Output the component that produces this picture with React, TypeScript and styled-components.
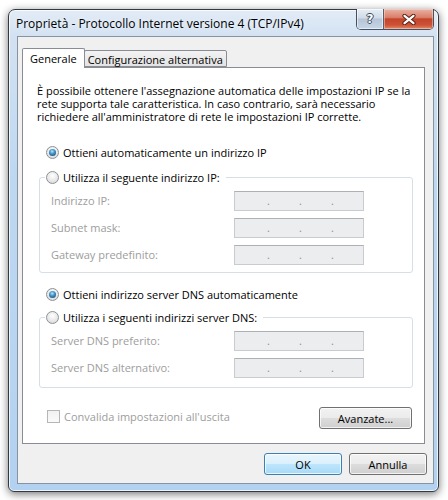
import styled, { createGlobalStyle } from "styled-components";

const GlobalStyle = createGlobalStyle`
  html, body {
    margin: 0;
    padding: 0;
    background: #ffffff;
  }
  body {
    font-family: "Segoe UI", "Open Sans", "Noto Sans", sans-serif;
    font-size: 11px;
    color: #000;
  }
  * {
    box-sizing: border-box;
  }
`;

// Desktop and window frame
const Desktop = styled.div`
  width: 448px;
  height: 500px;
  padding: 9px 0 0 8px;
  background: #ffffff;
`;

const Window = styled.div`
  width: 431px;
  height: 483px;
  display: flex;
  flex-direction: column;
  padding: 0 4px 7px 8px;
  border: 1px solid #343a42;
  border-radius: 7px 7px 6px 6px;
  background: linear-gradient(
    180deg,
    #e2ecf7 0px,
    #d3e2f2 26px,
    #bfd8f1 160px,
    #b3d1f0 100%
  );
  box-shadow: 0 2px 9px rgba(0, 0, 0, 0.55),
    inset 0 0 0 1px rgba(255, 255, 255, 0.75);
`;

const TitleBar = styled.div`
  height: 26px;
  display: flex;
  justify-content: space-between;
  align-items: flex-start;
`;

const Title = styled.div`
  margin-left: -1px;
  padding-top: 6px;
  font-size: 12px;
  line-height: 16px;
  color: #000;
  text-shadow: 0 0 5px rgba(255, 255, 255, 0.9);
`;

const CaptionButtons = styled.div`
  display: flex;
  height: 21px;
  margin-top: -1px;
  border: 1px solid rgba(45, 55, 68, 0.85);
  border-top: none;
  border-radius: 0 0 5px 5px;
  overflow: hidden;
`;

const HelpButton = styled.div`
  width: 27px;
  display: flex;
  align-items: center;
  justify-content: center;
  border-right: 1px solid #56606c;
  background: linear-gradient(
    180deg,
    #e7eef6 0%,
    #d0dbe7 45%,
    #b5c5d7 50%,
    #c6d6e7 100%
  );
  box-shadow: inset 0 0 0 1px rgba(255, 255, 255, 0.55);
  font-family: "DejaVu Sans", sans-serif;
  font-weight: bold;
  font-size: 12px;
  color: #ffffff;
  text-shadow: 1px 0 0 #3a4756, -1px 0 0 #3a4756, 0 1px 0 #3a4756,
    0 -1px 0 #3a4756;
`;

const CloseButton = styled.div`
  width: 49px;
  display: flex;
  align-items: center;
  justify-content: center;
  background: linear-gradient(
    180deg,
    #eab1a4 0%,
    #d9806b 42%,
    #c3442a 50%,
    #cd5234 80%,
    #e28a6a 100%
  );
  box-shadow: inset 0 0 0 1px rgba(255, 230, 220, 0.45);
`;

// Client area
const Client = styled.div`
  flex: 1;
  display: flex;
  flex-direction: column;
  background: #f0f0f0;
  border: 1px solid #8793a0;
  padding: 11px 6px 8px 4px;
`;

const TabStrip = styled.div`
  height: 19px;
  display: flex;
  align-items: flex-end;
`;

const Tab = styled.div<{ $active?: boolean }>`
  position: relative;
  z-index: ${(p) => (p.$active ? 1 : 0)};
  height: ${(p) => (p.$active ? "20px" : "17px")};
  margin-bottom: ${(p) => (p.$active ? "-1px" : "0")};
  margin-left: ${(p) => (p.$active ? "0" : "-1px")};
  padding: ${(p) => (p.$active ? "0 7px" : "1px 3px 0 3px")};
  display: flex;
  align-items: center;
  border: 1px solid #898c95;
  border-bottom: ${(p) => (p.$active ? "none" : "1px solid #898c95")};
  border-radius: 2px 2px 0 0;
  background: ${(p) =>
    p.$active ? "#ffffff" : "linear-gradient(180deg, #f3f3f3, #e3e3e3)"};
  white-space: nowrap;
`;

const Panel = styled.div`
  flex: 1;
  margin-right: 2px;
  display: flex;
  flex-direction: column;
  background: #ffffff;
  border: 1px solid #898c95;
  padding: 16px 11px 14px 14px;
`;

const Description = styled.p`
  margin: 0;
  line-height: 13px;
  white-space: nowrap;
`;

const RadioRow = styled.label<{ $top: number }>`
  height: 16px;
  display: flex;
  align-items: center;
  gap: 4px;
  margin-top: ${(p) => p.$top}px;
  padding-left: 9px;
  white-space: nowrap;
`;

const Radio = styled.span<{ $checked?: boolean }>`
  width: 13px;
  height: 13px;
  flex: none;
  display: flex;
  align-items: center;
  justify-content: center;
  border-radius: 50%;
  border: 1px solid #8d9196;
  background: radial-gradient(
    circle at 50% 35%,
    #ffffff 0%,
    #e8e8e8 55%,
    #cfd1d3 100%
  );

  &::after {
    content: "";
    display: ${(p) => (p.$checked ? "block" : "none")};
    width: 7px;
    height: 7px;
    border-radius: 50%;
    background: radial-gradient(
      circle at 45% 35%,
      #bfe6fc 0%,
      #4b9dd2 35%,
      #164e7a 85%
    );
  }
`;

const GroupBox = styled.fieldset<{ $top: number }>`
  margin: ${(p) => p.$top}px 0 0 2px;
  padding: 6px 10px ${(p) => (p.$top > 8 ? 7 : 9)}px 11px;
  min-width: 0;
  border: 1px solid #d5dfe5;
  border-radius: 3px;
`;

const Legend = styled.legend`
  height: 16px;
  margin-left: -6px;
  padding: 0 6px 0 1px;
  display: flex;
  align-items: center;
  gap: 4px;
  white-space: nowrap;
`;

const FieldGrid = styled.div`
  display: grid;
  grid-template-columns: 183px 130px;
  row-gap: 7px;
  align-items: center;
`;

const FieldLabel = styled.span`
  color: #9d9d9d;
  line-height: 20px;
`;

const IpBox = styled.div`
  height: 20px;
  display: flex;
  padding-left: 3px;
  border: 1px solid #c9cbce;
  border-top-color: #adb0b4;
  background: #ebedef;
  color: #8f8f8f;
  line-height: 18px;
`;

const IpSegment = styled.span`
  width: 32px;
  text-align: right;
`;

const BottomRow = styled.div`
  margin: 19px 1px 0 2px;
  padding-left: 8px;
  display: flex;
  align-items: center;
  justify-content: space-between;
`;

const CheckRow = styled.label`
  display: flex;
  align-items: center;
  gap: 4px;
  margin-top: -3px;
  color: #9d9d9d;
`;

const CheckBox = styled.span`
  width: 13px;
  height: 13px;
  border: 1px solid #b4b6b8;
  background: linear-gradient(180deg, #f1f1f1, #fafafa);
`;

const ButtonRow = styled.div`
  margin-top: 9px;
  display: flex;
  justify-content: flex-end;
  gap: 7px;
`;

const Button = styled.button<{ $width: number; $primary?: boolean }>`
  width: ${(p) => p.$width}px;
  height: 22px;
  padding: 0;
  border-radius: 3px;
  border: 1px solid ${(p) => (p.$primary ? "#3c7fb1" : "#707070")};
  background: ${(p) =>
    p.$primary
      ? "linear-gradient(180deg, #eaf6fd 0%, #d9f0fc 50%, #bee6fd 50%, #a7d9f5 100%)"
      : "linear-gradient(180deg, #f2f2f2 0%, #ebebeb 50%, #dddddd 50%, #cfcfcf 100%)"};
  box-shadow: inset 0 0 0 1px rgba(255, 255, 255, 0.75);
  font-family: inherit;
  font-size: 11px;
  color: #000;
`;

const IpField = () => (
  <IpBox>
    <IpSegment>.</IpSegment>
    <IpSegment>.</IpSegment>
    <IpSegment>.</IpSegment>
  </IpBox>
);

const ipRows = ["Indirizzo IP:", "Subnet mask:", "Gateway predefinito:"];
const dnsRows = ["Server DNS preferito:", "Server DNS alternativo:"];

const App = () => {
  return (
    <Desktop>
      <GlobalStyle />
      <Window>
        <TitleBar>
          <Title>Proprietà - Protocollo Internet versione 4 (TCP/IPv4)</Title>
          <CaptionButtons>
            <HelpButton>?</HelpButton>
            <CloseButton>
              <svg width="14" height="11" viewBox="0 0 14 11">
                <path
                  d="M2.5 1.8 L11.5 9.2 M11.5 1.8 L2.5 9.2"
                  stroke="#5a2118"
                  strokeWidth="4.2"
                  strokeLinecap="round"
                />
                <path
                  d="M2.5 1.8 L11.5 9.2 M11.5 1.8 L2.5 9.2"
                  stroke="#ffffff"
                  strokeWidth="2.2"
                  strokeLinecap="round"
                />
              </svg>
            </CloseButton>
          </CaptionButtons>
        </TitleBar>

        <Client>
          <TabStrip>
            <Tab $active>Generale</Tab>
            <Tab>Configurazione alternativa</Tab>
          </TabStrip>

          <Panel>
            <Description>
              È possibile ottenere l'assegnazione automatica delle impostazioni
              IP se la
              <br />
              rete supporta tale caratteristica. In caso contrario, sarà
              necessario
              <br />
              richiedere all'amministratore di rete le impostazioni IP corrette.
            </Description>

            <RadioRow $top={21}>
              <Radio $checked />
              Ottieni automaticamente un indirizzo IP
            </RadioRow>

            <GroupBox $top={9}>
              <Legend>
                <Radio />
                Utilizza il seguente indirizzo IP:
              </Legend>
              <FieldGrid>
                {ipRows.map((label) => (
                  <>
                    <FieldLabel key={label}>{label}</FieldLabel>
                    <IpField key={label + "-box"} />
                  </>
                ))}
              </FieldGrid>
            </GroupBox>

            <RadioRow $top={13}>
              <Radio $checked />
              Ottieni indirizzo server DNS automaticamente
            </RadioRow>

            <GroupBox $top={7}>
              <Legend>
                <Radio />
                Utilizza i seguenti indirizzi server DNS:
              </Legend>
              <FieldGrid>
                {dnsRows.map((label) => (
                  <>
                    <FieldLabel key={label}>{label}</FieldLabel>
                    <IpField key={label + "-box"} />
                  </>
                ))}
              </FieldGrid>
            </GroupBox>

            <BottomRow>
              <CheckRow>
                <CheckBox />
                Convalida impostazioni all'uscita
              </CheckRow>
              <Button $width={93}>Avanzate...</Button>
            </BottomRow>
          </Panel>

          <ButtonRow>
            <Button $width={78} $primary>
              OK
            </Button>
            <Button $width={78}>Annulla</Button>
          </ButtonRow>
        </Client>
      </Window>
    </Desktop>
  );
};

export default App;
